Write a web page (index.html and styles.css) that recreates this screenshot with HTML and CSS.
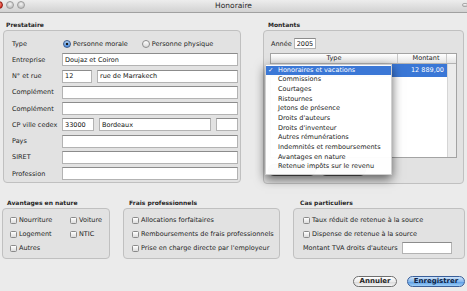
FILE: index.html
```html
<!DOCTYPE html>
<html lang="fr">
<head>
    <meta charset="UTF-8">
    <meta name="viewport" content="width=device-width, initial-scale=1.0">
    <title>Honoraire</title>
    <link rel="stylesheet" href="styles.css">
</head>
<body>
<div class="window">
    <div class="titlebar">
        <div class="lights">
            <span class="light red"></span>
            <span class="light"></span>
            <span class="light"></span>
        </div>
        <div class="title">Honoraire</div>
        <div class="toolbar-toggle"><span></span></div>
    </div>

    <div class="content">
        <div class="top-row">
            <section class="group prestataire">
                <h2 class="group-title">Prestataire</h2>
                <div class="group-box form">
                    <div class="form-row">
                        <label>Type</label>
                        <span class="radio checked"></span><span class="radio-text">Personne morale</span>
                        <span class="radio second"></span><span class="radio-text">Personne physique</span>
                    </div>
                    <div class="form-row">
                        <label>Entreprise</label>
                        <input type="text" class="field grow" value="Doujaz et Coiron">
                    </div>
                    <div class="form-row">
                        <label>N° et rue</label>
                        <input type="text" class="field num" value="12">
                        <input type="text" class="field grow" value="rue de Marrakech">
                    </div>
                    <div class="form-row">
                        <label>Complément</label>
                        <input type="text" class="field grow">
                    </div>
                    <div class="form-row">
                        <label>Complément</label>
                        <input type="text" class="field grow">
                    </div>
                    <div class="form-row">
                        <label>CP ville cedex</label>
                        <input type="text" class="field cp" value="33000">
                        <input type="text" class="field grow" value="Bordeaux">
                        <input type="text" class="field cedex">
                    </div>
                    <div class="form-row">
                        <label>Pays</label>
                        <input type="text" class="field grow">
                    </div>
                    <div class="form-row">
                        <label>SIRET</label>
                        <input type="text" class="field grow">
                    </div>
                    <div class="form-row">
                        <label>Profession</label>
                        <input type="text" class="field grow">
                    </div>
                </div>
            </section>

            <section class="group montants">
                <h2 class="group-title">Montants</h2>
                <div class="group-box">
                    <div class="year-row">
                        <span class="year-label">Année</span>
                        <input type="text" class="field year" value="2005">
                    </div>
                    <div class="table">
                        <div class="table-head">
                            <div class="col-type">Type</div>
                            <div class="col-amount">Montant</div>
                            <div class="col-corner"></div>
                        </div>
                        <div class="table-body">
                            <div class="rows">
                                <!-- type cell is covered by the open popup menu -->
                                <div class="table-row selected">
                                    <div class="col-type"></div>
                                    <div class="col-amount">12 889,00</div>
                                </div>
                            </div>
                            <div class="scroll-track"></div>
                        </div>
                    </div>
                    <div class="table-buttons">
                        <span class="small-btn wide"></span>
                        <span class="small-btn"></span>
                    </div>
                </div>
            </section>
        </div>

        <div class="bottom-row">
            <section class="group avantages">
                <h2 class="group-title">Avantages en nature</h2>
                <div class="group-box checks grid">
                    <div class="check-row"><span class="checkbox"></span>Nourriture</div>
                    <div class="check-row"><span class="checkbox"></span>Voiture</div>
                    <div class="check-row"><span class="checkbox"></span>Logement</div>
                    <div class="check-row"><span class="checkbox"></span>NTIC</div>
                    <div class="check-row"><span class="checkbox"></span>Autres</div>
                </div>
            </section>

            <section class="group frais">
                <h2 class="group-title">Frais professionnels</h2>
                <div class="group-box checks">
                    <div class="check-row"><span class="checkbox"></span>Allocations forfaitaires</div>
                    <div class="check-row"><span class="checkbox"></span>Remboursements de frais professionnels</div>
                    <div class="check-row"><span class="checkbox"></span>Prise en charge directe par l'employeur</div>
                </div>
            </section>

            <section class="group cas">
                <h2 class="group-title">Cas particuliers</h2>
                <div class="group-box checks">
                    <div class="check-row"><span class="checkbox"></span>Taux réduit de retenue à la source</div>
                    <div class="check-row"><span class="checkbox"></span>Dispense de retenue à la source</div>
                    <div class="check-row">
                        <span class="tva-label">Montant TVA droits d'auteurs</span>
                        <input type="text" class="field tva">
                    </div>
                </div>
            </section>
        </div>

        <div class="actions">
            <button type="button" class="btn cancel">Annuler</button>
            <button type="button" class="btn save">Enregistrer</button>
        </div>
    </div>

    <!-- popup menu of the Type column, open over the table -->
    <div class="menu">
        <div class="menu-item selected"><span class="check">✓</span>Honoraires et vacations</div>
        <div class="menu-item">Commissions</div>
        <div class="menu-item">Courtages</div>
        <div class="menu-item">Ristournes</div>
        <div class="menu-item">Jetons de présence</div>
        <div class="menu-item">Droits d'auteurs</div>
        <div class="menu-item">Droits d'inventeur</div>
        <div class="menu-item">Autres rémunérations</div>
        <div class="menu-item">Indemnités et remboursements</div>
        <div class="menu-item">Avantages en nature</div>
        <div class="menu-item">Retenue impôts sur le revenu</div>
    </div>
</div>
</body>
</html>
```

FILE: styles.css
```css
* {
    box-sizing: border-box;
}

body {
    margin: 0;
    width: 467px;
    height: 291px;
    overflow: hidden;
    background-color: #ebebeb;
    font-family: "DejaVu Sans", "Liberation Sans", sans-serif;
    font-size: 6.5px;
    color: #1e1e1e;
}

.window {
    position: relative;
    width: 467px;
    height: 291px;
}

/* title bar */
.titlebar {
    height: 13px;
    display: grid;
    grid-template-columns: 1fr auto 1fr;
    background: linear-gradient(#ededed, #d2d2d2);
    border-bottom: 1px solid #a0a0a0;
}

.lights {
    display: flex;
    gap: 3px;
    margin-left: -5px;
    margin-top: 1px;
}

.light {
    width: 8px;
    height: 8px;
    border-radius: 50%;
    background: radial-gradient(circle at 50% 35%, #f4f4f4, #c4c4c4 70%, #a8a8a8);
    border: 1px solid #9c9c9c;
}

.light.red {
    background: radial-gradient(circle at 50% 35%, #ff9d8e, #d8352a 70%, #a51a12);
    border-color: #8f1d15;
}

.title {
    font-size: 7.5px;
    line-height: 12px;
    color: #2a2a2a;
}

.toolbar-toggle {
    display: flex;
    justify-content: flex-end;
}

.toolbar-toggle span {
    width: 6px;
    height: 4px;
    margin-top: 3px;
    margin-right: -1px;
    border-radius: 2px;
    background: linear-gradient(#fafafa, #c8c8c8);
    border: 1px solid #a9a9a9;
}

.content {
    padding-top: 7px;
}

/* group boxes */
.group-title {
    margin: 0;
    height: 10px;
    line-height: 10px;
    padding-left: 5px;
    font-size: 6px;
    font-weight: bold;
    color: #262626;
}

.group-box {
    background-color: #e2e2e2;
    border: 1px solid #c0c0c0;
    border-radius: 4px;
}

.top-row {
    display: flex;
    align-items: flex-start;
    gap: 22px;
    padding-left: 3px;
}

.prestataire {
    width: 238px;
}

.prestataire .group-title {
    padding-left: 3px;
}

.form {
    display: flex;
    flex-direction: column;
    gap: 3.25px;
    padding: 6px 2px 2px 8px;
}

.form-row {
    display: flex;
    align-items: center;
    gap: 5px;
    height: 13px;
}

.form-row label {
    width: 45px;
    flex: none;
    white-space: nowrap;
}

.field {
    height: 13px;
    padding: 0 2px;
    margin: 0;
    border: 1px solid #b3b3b3;
    border-top-color: #8c8c8c;
    background-color: white;
    font-family: inherit;
    font-size: 6.5px;
    color: #111;
    outline: none;
    min-width: 0;
}

.field.grow {
    flex: 1;
}

.field.num {
    width: 30px;
}

.field.cp {
    width: 32px;
}

.field.cedex {
    width: 22px;
}

.radio {
    width: 8px;
    height: 8px;
    flex: none;
    border-radius: 50%;
    border: 1px solid #8d8d8d;
    background: linear-gradient(#ffffff, #d9d9d9);
    margin-left: 1px;
    margin-right: -3px;
}

.radio.checked {
    border-color: #3b5a8c;
    background: radial-gradient(circle, #1b1b1b 0, #1b1b1b 1.3px, transparent 1.6px),
                linear-gradient(#a9cdf3, #4d8ee0);
}

.radio.second {
    margin-left: 9px;
}

.radio-text {
    white-space: nowrap;
}

/* montants */
.montants {
    width: 201px;
}

.montants .group-box {
    height: 154px;
    padding: 7px 6px 0 6px;
}

.year-row {
    display: flex;
    align-items: center;
    gap: 2px;
    height: 11px;
    padding-left: 1px;
}

.field.year {
    width: 22px;
    height: 11px;
}

.table {
    margin-top: 4px;
    width: 187px;
    height: 105px;
    display: flex;
    flex-direction: column;
    border: 1px solid #a3a3a3;
    background-color: white;
}

.table-head {
    display: flex;
    height: 10px;
    line-height: 9px;
    background: linear-gradient(#ffffff, #e4e4e4);
    border-bottom: 1px solid #b3b3b3;
}

.col-type {
    width: 127px;
    flex: none;
}

.col-amount {
    width: 49px;
    flex: none;
}

.table-head .col-type,
.table-head .col-amount {
    text-align: center;
    border-right: 1px solid #c8c8c8;
}

.table-head .col-amount {
    padding-left: 8px;
}

.col-corner {
    flex: 1;
}

.table-body {
    flex: 1;
    display: flex;
}

.rows {
    width: 176px;
}

.table-row {
    display: flex;
    height: 13px;
    line-height: 13px;
}

.table-row .col-amount {
    text-align: right;
    padding-right: 3px;
}

.table-row.selected {
    background-color: #3a77d6;
    color: white;
}

.scroll-track {
    flex: 1;
    background-color: #ececec;
    border-left: 1px solid #d5d5d5;
}

.table-buttons {
    display: flex;
    gap: 4px;
    margin-top: 6px;
    margin-left: -2px;
}

.small-btn {
    width: 46px;
    height: 12px;
    border-radius: 6px;
    border: 1px solid #5a5a5a;
    background: linear-gradient(#9a9a9a, #6c6c6c);
}

.small-btn.wide {
    width: 48px;
}

/* bottom groups */
.bottom-row {
    display: flex;
    align-items: flex-start;
    gap: 13px;
    margin-top: 14px;
    padding-left: 2px;
}

.avantages {
    width: 108px;
}

.frais {
    width: 157px;
}

.frais .group-title {
    padding-left: 6px;
}

.cas {
    width: 172px;
}

.cas .group-title {
    padding-left: 7px;
}

.checks {
    height: 51px;
    display: flex;
    flex-direction: column;
    gap: 2px;
    padding: 5px 4px 0 8px;
}

.checks.grid {
    display: grid;
    grid-template-columns: 58px auto;
    grid-auto-rows: 12px;
    row-gap: 2px;
    padding-left: 7px;
}

.cas .checks {
    padding-left: 9px;
}

.check-row {
    display: flex;
    align-items: center;
    gap: 2px;
    height: 12px;
    white-space: nowrap;
}

.checkbox {
    width: 7px;
    height: 7px;
    flex: none;
    border: 1px solid #8a8a8a;
    border-radius: 1.5px;
    background: linear-gradient(#ffffff, #dcdcdc);
}

.tva-label {
    width: 99px;
    flex: none;
}

.check-row .field.tva {
    width: 50px;
    height: 12px;
    margin-left: -2px;
}

/* dialog buttons */
.actions {
    display: flex;
    justify-content: flex-end;
    gap: 10px;
    margin-top: 17px;
    padding-right: 2px;
}

.btn {
    height: 11px;
    padding: 0;
    border-radius: 6px;
    border: 1px solid #6f6f6f;
    background: linear-gradient(#ffffff, #ececec 50%, #d6d6d6 51%, #f4f4f4);
    font-family: inherit;
    font-size: 7px;
    font-weight: bold;
    line-height: 9px;
    color: #262626;
}

.btn.cancel {
    width: 44px;
}

.btn.save {
    width: 58px;
    border-color: #3b5f99;
    background: linear-gradient(#cfe4fa, #88b9ee 50%, #5598e3 51%, #9fd0f7);
    color: #0d2446;
}

/* popup menu */
.menu {
    position: absolute;
    left: 265px;
    top: 63.5px;
    width: 127px;
    padding: 1px 0 2px;
    background-color: rgba(255, 255, 255, 0.97);
    border: 1px solid rgba(0, 0, 0, 0.18);
    box-shadow: 0 4px 10px rgba(0, 0, 0, 0.6);
}

.menu-item {
    position: relative;
    height: 9.7px;
    line-height: 9.7px;
    padding-left: 12px;
    white-space: nowrap;
    color: #1a1a1a;
}

.menu-item.selected {
    background-color: #3a77d6;
    color: white;
}

.check {
    position: absolute;
    left: 2px;
    top: 0;
}
```
